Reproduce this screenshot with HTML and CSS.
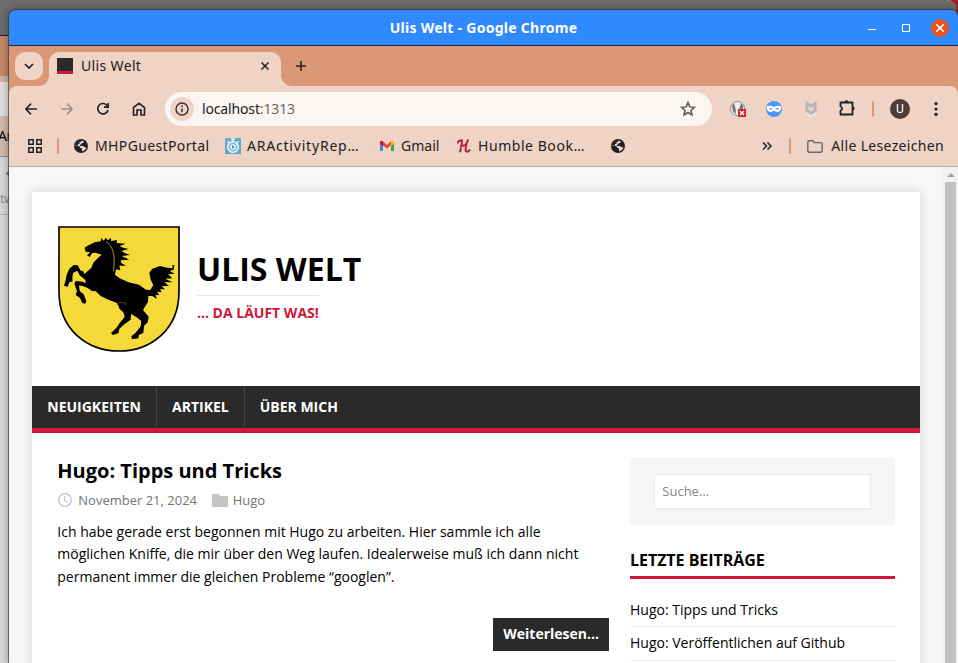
FILE: index.html
```html
<!DOCTYPE html>
<html lang="de">
<head>
<meta charset="utf-8">
<title>Ulis Welt</title>
<link rel="stylesheet" href="styles.css">
</head>
<body>
<div class="back-window">
  <div class="back-title"></div>
  <div class="back-tabs"></div>
  <div class="back-strip"></div>
  <div class="back-address"></div>
  <div class="back-bookmarks"><span>Ar</span></div>
  <div class="back-page"><b></b><span>tw</span></div>
</div>
<div class="window">
  <header class="titlebar">
    <span class="window-title">Ulis Welt - Google Chrome</span>
    <div class="window-buttons"><i class="min"></i><i class="max"></i><i class="close"><svg width="10" height="10" viewBox="0 0 10 10"><path d="M1.200 1.200l7.600 7.600M8.800 1.200L1.200 8.800" stroke="#fff" stroke-width="1.600"/></svg></i></div>
  </header>
  <div class="tabstrip">
    <button class="tab-search"><svg width="10" height="6" viewBox="0 0 10 6"><path d="M1 1l4 4 4-4" fill="none" stroke="#222" stroke-width="1.7"/></svg></button>
    <div class="tab"><i class="favicon"></i><span>Ulis Welt</span><svg class="tab-close" width="8" height="8" viewBox="0 0 8 8"><path d="M.5.5l7 7M7.500.5l-7 7" stroke="#222" stroke-width="1.5"/></svg></div>
    <svg class="new-tab" width="12" height="12" viewBox="0 0 12 12"><path d="M6 1v10M1 6h10" stroke="#222" stroke-width="1.6"/></svg>
  </div>
  <div class="toolbar">
    <div class="nav-icons">
      <svg width="12" height="12" viewBox="0 0 12 12"><path d="M12 6H1M6 .6L.8 6 6 11.400" fill="none" stroke="#222" stroke-width="1.6"/></svg>
      <svg width="12" height="12" viewBox="0 0 12 12"><path d="M0 6h11M6 .6L11.200 6 6 11.400" fill="none" stroke="#a48f86" stroke-width="1.6"/></svg>
      <svg width="14" height="14" viewBox="0 0 14 14"><path d="M12 8a5.200 5.200 0 1 1-.8-4.300M12.200 1v4.200H8" fill="none" stroke="#222" stroke-width="1.7"/></svg>
      <svg width="14" height="14" viewBox="0 0 14 14"><path d="M1.500 13V5.500L7 1.200l5.500 4.300V13H9V8H5v5z" fill="none" stroke="#222" stroke-width="1.6"/></svg>
    </div>
    <div class="omnibox">
      <i class="site-info"><svg width="14" height="14" viewBox="0 0 14 14"><circle cx="7" cy="7" r="6" fill="none" stroke="#333" stroke-width="1.400"/><path d="M7 6.200v4M7 3.500v1.500" stroke="#333" stroke-width="1.500"/></svg></i>
      <span class="url">localhost<em>:1313</em></span>
      <svg class="star" width="16" height="16" viewBox="0 0 16 16"><path d="M8 1.500l1.800 4.400 4.700.4-3.600 3.100 1.100 4.600L8 11.500 4 14l1.100-4.600L1.500 6.300l4.700-.4z" fill="none" stroke="#555" stroke-width="1.500"/></svg>
    </div>
    <div class="extensions">
      <svg width="16" height="16" viewBox="0 0 16 16"><circle cx="7.500" cy="7.500" r="7" fill="#eee" stroke="#888"/><path d="M3.500 2.500Q6 5 6 13L3 10.500 2 5zM11.500 2.500Q9 5 9 13l4-4V5z" fill="#777"/><path d="M8 8h8v8H8z" fill="#cc252d"/><path d="M10 10l4 4m0-4l-4 4" stroke="#fff" stroke-width="1.300"/></svg>
      <svg width="16" height="16" viewBox="0 0 16 16"><circle cx="8" cy="8" r="8" fill="#4b98ef"/><path d="M.5 5.500Q4.500 4 8 6q3.500-2 7.500-.5-.3 5.500-4.300 5.500-2 0-3.200-1.700Q6.800 11 4.800 11 .8 11 .5 5.500z" fill="#fff"/><ellipse cx="4.800" cy="7.800" rx="1.700" ry=".8" fill="#4b98ef"/><ellipse cx="11.200" cy="7.800" rx="1.700" ry=".8" fill="#4b98ef"/></svg>
      <svg width="12" height="16" viewBox="0 0 12 16"><path d="M.5 0l5.500 3.500L11.500 0v10L6 13.500.5 10z" fill="#b5b5b5"/><path d="M3.500 9V4.500L6 7l2.500-2.500V9L6 10.500z" fill="#e6d6ce"/><path d="M.8 12L6 15.200 11.200 12" fill="none" stroke="#f3f3f3" stroke-width="1.500"/><path d="M.8 11.200L6 14.300l5.200-3.100" fill="none" stroke="#bbb" stroke-width=".7"/></svg>
      <svg class="puzzle" width="17" height="17" viewBox="0 0 17 17"><path d="M1.500 3.500h12v12h-12v-3.800a2.200 2.200 0 0 0 0-4.200z" fill="none" stroke="#222" stroke-width="1.800" stroke-linejoin="round"/><path d="M5.500 3.500a2 2.200 0 0 1 4 0zM13.500 7.500a2.200 2 0 0 1 0 4z" fill="#222"/></svg>
      <i class="divider"></i><span class="avatar">U</span>
      <svg width="4" height="14" viewBox="0 0 4 14" fill="#222"><circle cx="2" cy="1.700" r="1.600"/><circle cx="2" cy="7" r="1.600"/><circle cx="2" cy="12.300" r="1.600"/></svg>
    </div>
  </div>
  <div class="bookmarks">
    <svg class="apps" width="14" height="14" viewBox="0 0 14 14"><path d="M.8.8h4.400v4.400H.8zM8.800.8h4.400v4.400H8.800zM.8 8.800h4.400v4.400H.8zM8.800 8.800h4.400v4.400H8.800z" fill="none" stroke="#222" stroke-width="1.500"/></svg>
    <i class="divider"></i>
    <span class="bookmark portal"><svg width="14" height="14" viewBox="0 0 14 14"><circle cx="7" cy="7" r="7" fill="#202124"/><path d="M1.500 6.500L4.500 7q2 .2 2 2.200H8v3q3.500-.5 4.500-4-1 .5-2-.2T9 7H6V5.500h1.500V4h2V2Q6 1 3.500 3z" fill="#efd3c5"/><path d="M3.500 3Q5 1.500 7 1.500V3H5.500v2H4v2L1.500 5.500zM2 7.500l4 3.500v1.500Q2.500 11.500 2 7.500z" fill="#202124"/></svg><span>MHPGuestPortal</span></span>
    <span class="bookmark activity"><svg width="16" height="16" viewBox="0 0 16 16"><path d="M0 0h16v16H0z" fill="#65a9c8"/><path d="M6 1h4M8 1v3M2.500 3.500l1.500 1M13.500 3.500l-1.500 1" stroke="#fff" stroke-width="1.300"/><circle cx="8" cy="9" r="5.300" fill="#82bfd8" stroke="#fff" stroke-width="1.300"/><circle cx="8" cy="9" r="2.800" fill="#eff9fc"/><path d="M7 7l3 2-3 2z" fill="#3999bd"/></svg><span>ARActivityRep…</span></span>
    <span class="bookmark gmail"><svg width="14" height="12" viewBox="0 0 14 12"><path d="M0 2h3v9H0z" fill="#4a83ef"/><path d="M11 2h3v9h-3z" fill="#35a853"/><path d="M0 2q1-2 3-.5L7 5l4-3.500V5L7 8.500 0 3z" fill="#e54335"/><path d="M11 1.500q2-1.500 3 .5v2l-3 2z" fill="#fbbc04"/><path d="M0 2q1-2 3-.5V6L0 4z" fill="#c51f2b"/></svg><span>Gmail</span></span>
    <span class="bookmark humble"><svg width="14" height="14" viewBox="0 0 14 14"><path d="M.6 4.500Q1 1.300 4.800 1.200q.5 3-1.800 12M11.300.6Q8 6 8.800 12q2.200 1.800 4.400-1.500M3 8.300Q6.500 5.500 9.500 6.500" fill="none" stroke="#bd1f40" stroke-width="2"/></svg><span>Humble Book…</span></span>
    <span class="bookmark globe"><svg width="14" height="14" viewBox="0 0 14 14"><circle cx="7" cy="7" r="7" fill="#202124"/><path d="M1.500 6.500L4.500 7q2 .2 2 2.200H8v3q3.500-.5 4.500-4-1 .5-2-.2T9 7H6V5.500h1.500V4h2V2Q6 1 3.500 3z" fill="#efd3c5"/><path d="M3.500 3Q5 1.500 7 1.500V3H5.500v2H4v2L1.500 5.500zM2 7.500l4 3.500v1.500Q2.500 11.500 2 7.500z" fill="#202124"/></svg></span>
    <span class="all-bookmarks"><svg width="10" height="8" viewBox="0 0 10 8"><path d="M1 .5L4.500 4 1 7.500M5.500.5L9 4 5.500 7.500" fill="none" stroke="#222" stroke-width="1.500"/></svg><i class="divider"></i><svg width="16" height="13" viewBox="0 0 16 13"><path d="M.8 2.200q0-1.400 1.400-1.400h3.600l1.700 1.800h6.300q1.400 0 1.400 1.400v6.800q0 1.400-1.400 1.400H2.200Q.8 12.200.8 10.800z" fill="none" stroke="#666" stroke-width="1.400"/></svg><span>Alle Lesezeichen</span></span>
  </div>
  <div class="viewport">
    <div class="page">
      <div class="container">
        <header class="site-header">
          <svg class="logo" width="122" height="126" viewBox="54 33 366 378">
            <path d="M57 36H417V230C417 342 334 408 237 408S57 342 57 230Z" fill="#f5d938" stroke="#000" stroke-width="5"/>
            <path d="M135 105L134 98 143 92 164 82 182 79 184 69 191 77 197 68 204 76 213 68 213 78 231 75 230 84 257 86 239 93 249 98 266 102 244 108 254 114 270 120 245 123 268 134 242 136 244 144 258 152 238 152 241 166 228 163 225 179 239 190 266 202 297 209 318 224 331 225 340 211 332 194 328 174 337 161 360 153 382 158 398 160 397 150 403 151 401 164 389 168 404 176 384 178 397 190 376 191 397 202 373 202 387 213 365 213 375 223 360 223 365 232 351 230 358 241 347 239 350 252 337 243 325 243 324 260 309 285 326 305 323 322 312 333 310 354 297 359 295 370 276 373 274 364 287 353 302 334 304 318 289 306 273 297 272 314 251 329 238 342 235 355 218 360 213 354 229 339 239 324 254 306 250 292 239 282 231 264 205 254 182 243 167 229 156 228 143 219 130 214 117 211 119 228 131 238 139 258 136 266 127 264 120 249 107 240 111 229 103 206 107 198 128 200 137 205 136 195 119 181 112 167 99 174 97 189 98 199 88 202 83 215 72 212 77 196 80 179 88 161 101 150 113 151 121 166 131 170 132 178 140 171 154 158 160 143 176 127 185 119 166 113 156 114 149 126 141 121 151 112 138 111Z"/>
            <path d="M198 80C217 92 228 118 220 169" fill="none" stroke="#f5d938" stroke-width="2"/>
            <path d="M166 230L170 224M236 262L257 264 257 271" fill="none" stroke="#f5d938" stroke-width="1"/>
          </svg>
          <div class="brand"><h1>ULIS WELT</h1><p>… DA LÄUFT WAS!</p></div>
        </header>
        <nav class="menu"><a>NEUIGKEITEN</a><a>ARTIKEL</a><a>ÜBER MICH</a></nav>
        <div class="wrapper">
          <main>
            <h2>Hugo: Tipps und Tricks</h2>
            <div class="meta"><svg width="14" height="14" viewBox="0 0 14 14"><circle cx="7" cy="7" r="6.300" fill="none" stroke="#c4c4c4" stroke-width="1.300"/><path d="M6.500 3v4.500l3 2" fill="none" stroke="#c4c4c4" stroke-width="1.200"/></svg><span>November 21, 2024</span><svg class="category" width="16" height="13" viewBox="0 0 16 13"><path d="M0 0h7l1 2h8v11H0z" fill="#c4c4c4"/></svg><span>Hugo</span></div>
            <p class="summary">Ich habe gerade erst begonnen mit Hugo zu arbeiten. Hier sammle ich alle<br>möglichen Kniffe, die mir über den Weg laufen. Idealerweise muß ich dann nicht<br>permanent immer die gleichen Probleme “googlen”.</p>
            <a class="more">Weiterlesen…</a>
          </main>
          <aside>
            <div class="search"><input placeholder="Suche…"></div>
            <h3>LETZTE BEITRÄGE</h3>
            <ul><li>Hugo: Tipps und Tricks</li><li>Hugo: Veröffentlichen auf Github</li></ul>
          </aside>
        </div>
      </div>
    </div>
    <div class="scrollbar"><i class="up"></i><i class="thumb"></i></div>
  </div>
</div>
</body>
</html>
```
FILE: styles.css
```css
* { box-sizing: border-box; }
html, body { height: 100%; margin: 0; overflow: hidden; }
body { background: #a02328; font-family: "Open Sans", sans-serif; }
svg { display: block; flex: none; }
i, em { font-style: normal; }
h1, h2, h3, p, ul { margin: 0; padding: 0; }

.back-window { position: absolute; left: -10px; top: 0; width: 966px; height: 663px; border-radius: 0 9px 0 0; overflow: hidden; background: #d9d9d9; padding-left: 8px; }
.back-title { height: 36px; margin-left: -8px; background: #6c6c6c; border-bottom: 1px solid #252525; }
.back-tabs { height: 40px; background: #c6886a; }
.back-strip { height: 6px; background: #cbb3a8; }
.back-address { height: 34px; background: #e4e0dd; }
.back-bookmarks { height: 41px; background: #d3bbb0; border-bottom: 1px solid #97857c; font: 14px/39px "Noto Sans", sans-serif; letter-spacing: -.5px; }
.back-page { height: 58px; border-bottom: 1px solid #b4b4b4; font-size: 13px; color: #888; position: relative; }
.back-page span { position: absolute; left: 2px; top: 32px; line-height: 18px; letter-spacing: -.6px; }
.back-page b { position: absolute; left: 9px; top: 14px; width: 5px; height: 5px; background: #666; transform: rotate(45deg); }

.window { position: absolute; left: 9px; top: 10px; width: 949px; height: 653px; border-radius: 7px 7px 0 0; overflow: hidden; box-shadow: 0 0 0 1px rgba(50,50,50,.6), 0 0 8px 1px rgba(0,0,0,.35); display: flex; flex-direction: column; font-family: "Noto Sans", sans-serif; color: #202124; }
.titlebar { height: 36px; flex: none; background: #3089ff; border-bottom: 1px solid #16294a; display: grid; grid-template-columns: 1fr auto; align-items: center; position: relative; }
.window-title { grid-column: 1 / 3; grid-row: 1; text-align: center; color: #fff; font-size: 14px; font-weight: 700; letter-spacing: .28px; }
.window-buttons { grid-column: 2; grid-row: 1; display: flex; align-items: center; padding-right: 9px; }
.min { width: 8px; height: 1px; background: #fff; margin: 4px 26px 0 0; }
.max { width: 8px; height: 8px; border: 1px solid #fff; margin-right: 21px; }
.close { width: 18px; height: 18px; border-radius: 50%; background: #e95420; display: grid; place-items: center; }

.tabstrip { height: 40px; flex: none; background: #db9877; display: flex; align-items: flex-start; padding: 6px 0 0 6px; }
.tab-search { width: 28px; height: 28px; border: 0; border-radius: 10px; background: #efd3c5; display: grid; place-items: center; padding: 0; }
.tab { width: 232px; height: 34px; margin-left: 6px; padding: 0 12px 6px 8px; border-radius: 10px 10px 0 0; background: #efd3c5; display: flex; align-items: center; font-size: 14px; position: relative; }
.tab span { letter-spacing: .35px; padding-bottom: 2px; }
.tab::before, .tab::after { content: ""; position: absolute; bottom: 0; width: 10px; height: 10px; }
.tab::before { left: -10px; background: radial-gradient(circle at 0 0, transparent 9.5px, #efd3c5 10px); }
.tab::after { right: -10px; background: radial-gradient(circle at 100% 0, transparent 9.5px, #efd3c5 10px); }
.favicon { width: 16px; height: 16px; background: #2a2a2a; border-bottom: 3px solid #d01737; margin-right: 8px; }
.tab-close { margin-left: auto; }
.new-tab { margin: 8px 0 0 14px; }

.toolbar { height: 46px; flex: none; background: linear-gradient(#db9877, #db9877) 0 0 / 100% 10px no-repeat; display: flex; align-items: center; position: relative; z-index: 0; }
.toolbar::before { content: ""; position: absolute; inset: 0; z-index: -1; background: #efd3c5; border-radius: 8px 8px 0 0; }
.nav-icons { width: 156px; padding-left: 16px; display: flex; align-items: center; gap: 24px; }
.nav-icons svg:nth-child(2) { margin-right: -1px; }
.nav-icons svg:nth-child(3) { margin-right: -2px; }
.omnibox { width: 547px; height: 34px; border-radius: 17px; background: #fcf6f2; display: flex; align-items: center; padding: 0 16px 0 5px; }
.site-info { width: 24px; height: 24px; border-radius: 50%; background: #efd3c5; display: grid; place-items: center; margin-right: 8px; }
.url { font-size: 14px; letter-spacing: -.15px; padding-bottom: 2px; }
.url em { color: #706762; }
.star { margin-left: auto; }
.extensions { flex: 1; display: flex; align-items: center; padding-left: 18px; }
.extensions > svg:nth-child(2) { margin-left: 20px; }
.extensions > svg:nth-child(3) { margin-left: 23px; }
.puzzle { margin: -3px 0 0 22px; }
.divider { width: 2px; height: 16px; background: #db9877; border-radius: 1px; }
.extensions .divider { margin-left: 16px; }
.avatar { width: 20px; height: 20px; border-radius: 50%; background: #503c35; color: #fff; font: 12px/20px Roboto, sans-serif; text-align: center; margin: 0 24px 0 16px; }

.bookmarks { height: 35px; flex: none; background: #efd3c5; border-bottom: 1px solid #c1a999; display: flex; align-items: center; padding: 0 14px 6px 19px; font-size: 14px; white-space: nowrap; }
.apps { margin-right: 15px; }
.bookmark { display: flex; align-items: center; gap: 7px; }
.bookmark > span, .all-bookmarks > span { padding-bottom: 2px; }
.portal { width: 151px; margin-left: 15px; letter-spacing: .37px; }
.activity { width: 155px; gap: 6px; letter-spacing: .8px; }
.gmail { width: 77px; }
.humble { width: 154px; letter-spacing: .55px; }
.all-bookmarks { display: flex; align-items: center; margin-left: auto; letter-spacing: .33px; }
.all-bookmarks .divider { margin: 0 16px 0 17px; }
.all-bookmarks span { margin-left: 8px; }

.viewport { flex: 1; min-height: 0; display: flex; background: #f7f7f7; font-family: "Open Sans", sans-serif; color: #000; }
.page { width: 934px; padding: 25px 23px 0; overflow: hidden; }
.container { height: 520px; background: #fff; box-shadow: 0 0 10px rgba(50,50,50,.17); }
.site-header { height: 194px; padding: 34px 26px; display: flex; align-items: flex-start; }
.brand { margin: 20px 0 0 17px; }
.brand h1 { font-size: 32px; line-height: 45px; font-weight: 700; }
.brand p { display: inline-block; border-top: 1px solid #e6e6e6; margin-top: 4px; padding-top: 7px; font-size: 14px; line-height: 19px; font-weight: 700; color: #d01737; }
.menu { height: 47px; background: #2a2a2a; border-bottom: 5px solid #d01737; display: flex; }
.menu a { color: #fff; font-size: 14px; line-height: 42px; font-weight: 700; padding: 0 15px 0 15.3px; border-right: 1px solid #424242; }
.menu a + a { padding-left: 15px; }
.menu a:last-child { border: 0; }
.wrapper { display: flex; justify-content: space-between; padding: 25px 25px 25px 25.3px; }
main { width: 551.7px; display: flex; flex-direction: column; }
h2 { font-size: 20px; line-height: 26px; }
.meta { display: flex; align-items: center; height: 18px; margin: 7px 0 12px; font-size: 13px; color: #747474; padding-left: .7px; }
.meta span { margin-left: 6.300px; }
.meta .category { margin-left: 14.700px; }
.meta .category + span { margin-left: 5px; }
.summary { font-size: 14px; line-height: 22.4px; }
.more { align-self: flex-end; margin-top: 30px; height: 33px; padding: 0 10px; background: #2a2a2a; color: #fff; font-size: 14px; font-weight: 700; line-height: 32px; }
aside { width: 265px; }
.search { height: 67px; background: #f5f5f5; padding: 16px 24px; }
.search input { width: 217px; height: 35px; border: 1px solid #ebebeb; background: #fff; padding: 0 7.300px 2px; font: 13px "Open Sans", sans-serif; }
.search input::placeholder { color: #858585; }
h3 { margin-top: 25px; height: 29px; font-size: 16px; line-height: 20px; letter-spacing: -.04px; border-bottom: 3px solid #d01737; }
ul { list-style: none; padding-top: 14px; }
li { height: 34px; font-size: 14px; line-height: 34px; border-bottom: 1px dotted #e2e2e2; }
li + li { line-height: 32px; }
.scrollbar { width: 15px; background: #f1f1f1; display: flex; flex-direction: column; align-items: center; }
.up { border: 4px solid transparent; border-top: 0; border-bottom: 4px solid #a3a3a3; margin-top: 6px; }
.thumb { width: 11px; flex: 1; margin-top: 5px; background: #c1c1c1; }
```
